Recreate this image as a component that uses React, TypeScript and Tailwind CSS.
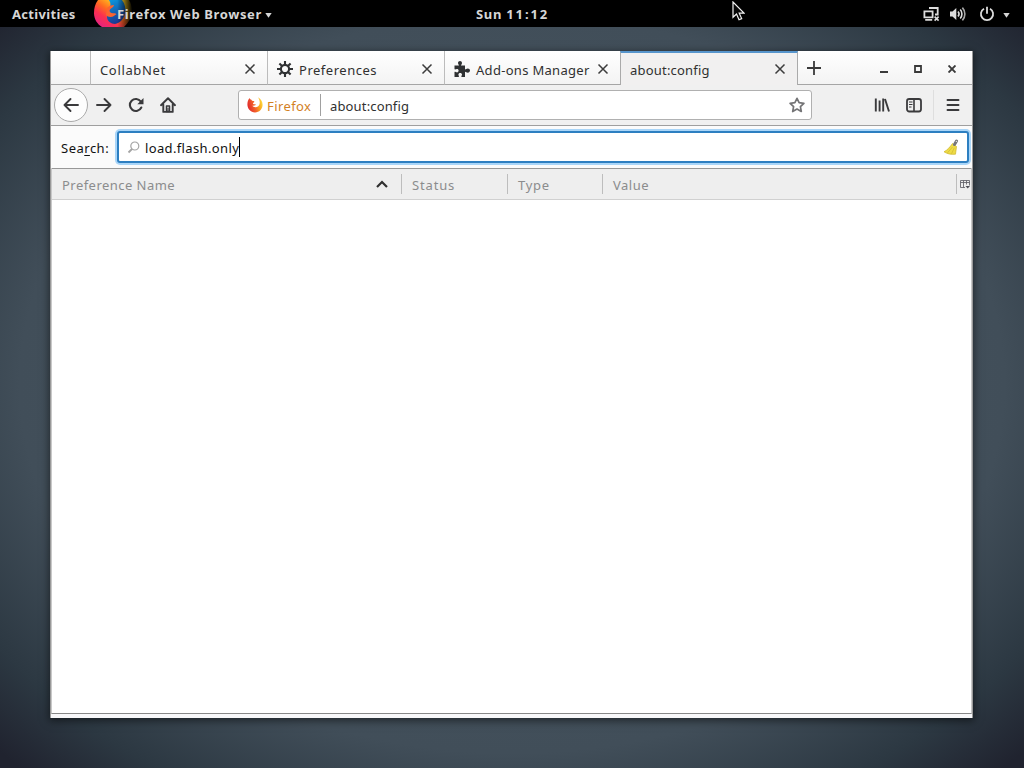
import React from "react";

const Close = ({ className = "" }: { className?: string }) => (
  <svg viewBox="0 0 12 12" className={`size-3 shrink-0 ${className}`} fill="none" stroke="#3c3c3c" strokeWidth="1.5">
    <path d="M1.5 1.5 10.5 10.5M10.5 1.5 1.5 10.5" />
  </svg>
);

const Gear = () => (
  <svg viewBox="-8 -8 16 16" className="mr-[6px] size-4 shrink-0" fill="none" stroke="#2f3133">
    <circle r="4.1" strokeWidth="2.1" />
    <path
      strokeWidth="2.1"
      d="M0-4.5V-8M0 4.5V8M-4.5 0H-8M4.5 0H8M-3.2-3.2-5.6-5.6M3.2 3.2 5.6 5.6M-3.2 3.2-5.6 5.6M3.2-3.2 5.6-5.6"
    />
  </svg>
);

const Puzzle = () => (
  <svg viewBox="0 0 16 16" className="mr-[6px] size-4 shrink-0" fill="#2f3133">
    <path d="M0.500 4.500H5C5 3.600 4 3 4 1.900 4 .8 4.900 0 6 0S8 .8 8 1.900C8 3 7 3.600 7 4.500H11V8.500C12 8.500 12.500 7.500 13.800 7.500C15 7.500 16 8.400 16 9.600C16 10.800 15 11.700 13.800 11.700C12.500 11.700 12 10.800 11 10.800V16H7.500C7 15 8 14.500 8 13.500C8 12.500 7.200 11.900 6.200 11.900C5.200 11.900 4.400 12.500 4.400 13.500C4.400 14.500 5.300 15 4.800 16H.5V11C1.500 10.500 2 11.400 3 11.400C4 11.400 4.600 10.600 4.600 9.600C4.600 8.600 4 7.900 3 7.900C2 7.900 1.500 8.800 .5 8.300Z" />
  </svg>
);

const FirefoxAppIcon = () => (
  <svg viewBox="0 0 40 27" className="absolute left-3 top-0 h-[27px] w-10">
    <defs>
      <linearGradient id="fxFlame" x1="0" y1="0.9" x2="0.9" y2="0">
        <stop offset="0" stopColor="#e0208a" />
        <stop offset="0.3" stopColor="#fb3050" />
        <stop offset="0.5" stopColor="#ff6a20" />
        <stop offset="0.8" stopColor="#ffcf20" />
      </linearGradient>
      <linearGradient id="fxGlobe" x1="0" y1="0" x2="0.3" y2="1">
        <stop offset="0" stopColor="#0a9be0" />
        <stop offset="1" stopColor="#1c3a94" />
      </linearGradient>
      <linearGradient id="fxFade" x1="0" y1="0" x2="1" y2="0">
        <stop offset="0.58" stopColor="#000" stopOpacity="0" />
        <stop offset="0.96" stopColor="#000" />
      </linearGradient>
    </defs>
    <path d="M4 0C1 4 0 8 0 13c0 6 3 11 8 14h22c5-5 8-10 8-16 0-4-1-8-3-11z" fill="url(#fxFlame)" />
    <path d="M15 0h13c3 4 4 8 3 13-1 6-5 10-10 11-4 0-8-3-8-7 0-3 1-6 2-8 2-3 2-6 0-9z" fill="url(#fxGlobe)" />
    <path d="M13 8c2-2 4-3 7-3 0 2-3 3-4 4.500-1 1.500 0 3 1.500 3.500 2 .5 4 0 5 1.300-2 1-3 2.700-6 2.700-2 0-3.500-1-4.500-2z" fill="#fb6430" />
    <path d="M0 0h40v27H0z" fill="url(#fxFade)" />
  </svg>
);

const SmallFirefox = () => (
  <svg viewBox="0 0 16 16" className="mr-[4px] size-4 shrink-0">
    <defs>
      <linearGradient id="fxSmall" x1="0" y1="0.6" x2="1" y2="0.3">
        <stop offset="0" stopColor="#e0282e" />
        <stop offset="0.45" stopColor="#f3642a" />
        <stop offset="0.7" stopColor="#f9a11b" />
        <stop offset="1" stopColor="#fde040" />
      </linearGradient>
    </defs>
    <path
      fill="url(#fxSmall)"
      d="M2.500 1C1 2.700.4 5 .4 7.600.4 12 3.800 15.500 8 15.500s7.600-3.400 7.600-7.700C15.600 4.500 14 2 11 .3c1.300 2 1.900 4 1.700 6-.3 2.500-2 3.900-4.300 3.900-1.400 0-2.500-.5-3.100-1.400 1.500.2 2.500-.2 3.500-1.100-.7-.9-1.700-.4-2.600-.8-.5-.7.1-1.100.9-1.700.3-.5.2-.8-.1-1.100-1.600 0-2.300-.5-2.600-1.400C3.500 2.500 2.900 2 2.500 1z"
    />
  </svg>
);

const TopBar = () => (
  <header className="relative flex h-[27px] shrink-0 items-center bg-black text-[13px] font-bold leading-[27px] text-[#d6d6d6]">
    <span className="w-[82px] pl-3 pt-px tracking-[0.33px]">Activities</span>
    <div className="relative flex h-full w-[200px] items-center overflow-hidden">
      <FirefoxAppIcon />
      <span className="relative ml-[35px] whitespace-nowrap pt-px tracking-[0.62px]">Firefox Web Browser</span>
      <svg viewBox="0 0 7 5" className="relative ml-[3px] mt-[4px] h-[5px] w-[7px]" fill="#d6d6d6">
        <path d="M.3 0h6.400L3.500 4.800z" />
      </svg>
    </div>
    <span className="ml-[194px] whitespace-nowrap pt-px tracking-[0.7px]">
      Sun <span className="tracking-[1.9px]">11:12</span>
    </span>
    <div className="ml-auto flex items-center pr-[14px]">
      <svg viewBox="0 0 17 16" className="mr-[10px] h-4 w-[17px]" fill="none" stroke="#dcdcdc" strokeWidth="1.800">
        <path d="M1.400 5.400h8.200v6H1.400zM2.200 13.800h7M6 2h8.700v6.500H12" />
        <path strokeWidth="1.600" d="m11.600 10.600 4 4M15.600 10.600l-4 4" />
      </svg>
      <svg viewBox="0 0 16 16" className="mr-[13px] size-4" fill="none" stroke="#dcdcdc" strokeWidth="1.600">
        <path fill="#dcdcdc" stroke="none" d="M0 5.500h2.500L6.300 2v12L2.500 10.500H0z" />
        <path d="M8 5.500c1.200 1.400 1.200 3.600 0 5M10.200 3.500c2.300 2.500 2.300 6.500 0 9" />
        <path stroke="#a5a5a5" d="M12.400 1.600c3.300 3.600 3.300 9.200 0 12.800" />
      </svg>
      <svg viewBox="0 0 16 16" className="mr-2 size-4" fill="none" stroke="#dcdcdc" strokeWidth="1.800">
        <path d="M5 2.700a6.100 6.100 0 1 0 6 0M8 .8v7" />
      </svg>
      <svg viewBox="0 0 7 5" className="mt-[4px] h-[5px] w-[7px]" fill="#d6d6d6">
        <path d="M.3 0h6.400L3.500 4.800z" />
      </svg>
    </div>
    <svg viewBox="0 0 13 20" className="absolute left-[732px] top-px h-5 w-[13px]">
      <path
        d="M1 1v15.300l3.500-3.200 2.500 5.700 2.700-1.200-2.500-5.400H12z"
        fill="#080808"
        stroke="#f2f2f2"
        strokeWidth="1.200"
      />
    </svg>
  </header>
);

const tabs = [
  { title: "CollabNet", icon: null, width: "w-[177px]", tracking: "tracking-[0.65px]" },
  { title: "Preferences", icon: <Gear />, width: "w-[177px]", tracking: "tracking-[0.52px]" },
  { title: "Add-ons Manager", icon: <Puzzle />, width: "w-[176px]", tracking: "tracking-[0.3px]" },
];

const TabStrip = () => (
  <div className="flex h-[34px] shrink-0 bg-linear-to-b from-white to-[#f3f3f3]">
    <div className="w-[39px] border-b border-[#a5a5a5]" />
    {tabs.map((t) => (
      <div
        key={t.title}
        className={`flex shrink-0 items-center border-b border-l border-b-[#a5a5a5] border-l-[#bcbcbc] pl-[9px] pr-[11px] pt-[3px] ${t.width}`}
      >
        {t.icon}
        <span className={`whitespace-nowrap pt-[2px] ${t.tracking}`}>{t.title}</span>
        <Close className="ml-auto" />
      </div>
    ))}
    <div className="flex w-[178px] shrink-0 items-center border-x border-t-2 border-x-[#aaa] border-t-[#5795cc] bg-[#f1f0f0] pl-[9px] pr-[11px]">
      <span className="pt-[2px] tracking-[0.2px]">about:config</span>
      <Close className="ml-auto" />
    </div>
    <div className="flex grow items-center border-b border-[#a5a5a5] pl-[9px] pr-[16px] text-[#3a3a3a]">
      <svg viewBox="0 0 14 14" className="size-[14px]" stroke="#3a3a3a" strokeWidth="1.800">
        <path d="M7 0v14M0 7h14" />
      </svg>
      <svg viewBox="0 0 8 10" className="ml-auto h-[10px] w-2 translate-y-[1px]" stroke="#3a3a3a" strokeWidth="2">
        <path d="M0 8h8" />
      </svg>
      <svg viewBox="0 0 8 8" className="ml-[26px] size-2 translate-y-[1px]" fill="none" stroke="#3a3a3a" strokeWidth="1.800">
        <path d="M1 1h6v6H1z" />
      </svg>
      <svg viewBox="0 0 8 8" className="ml-[26px] size-2 translate-y-[1px]" stroke="#3a3a3a" strokeWidth="1.900">
        <path d="m.5.5 7 7m0-7-7 7" />
      </svg>
    </div>
  </div>
);

const Toolbar = () => (
  <div className="flex h-[41px] shrink-0 items-center border-b border-[#9f9f9f] bg-[#f0f0f0] pl-[3px] pr-3">
    <div className="flex size-[34px] items-center justify-center rounded-full border border-[#aaa] bg-[#fdfdfd]">
      <svg viewBox="0 0 16 16" className="size-4" fill="none" stroke="#3a3a3c" strokeWidth="1.900" strokeLinecap="round" strokeLinejoin="round">
        <path d="M15 8H1.500M7.500 2 1.500 8l6 6" />
      </svg>
    </div>
    <svg viewBox="0 0 16 16" className="ml-2 size-4" fill="none" stroke="#3a3a3c" strokeWidth="1.900" strokeLinecap="round" strokeLinejoin="round">
      <path d="M1 8h13.500M8.500 2l6 6-6 6" />
    </svg>
    <svg viewBox="0 0 16 16" className="ml-4 size-4" fill="none" stroke="#3a3a3c" strokeWidth="2.100" strokeLinecap="round">
      <path d="M13.300 10.500A6 6 0 1 1 12.800 4.500" />
      <path d="M15.500 1v6.200H9.300z" fill="#3a3a3c" stroke="none" />
    </svg>
    <svg viewBox="0 0 16 16" className="ml-4 size-4" fill="none" stroke="#3a3a3c" strokeWidth="1.900" strokeLinecap="round" strokeLinejoin="round">
      <path d="M1 8.200 8 1.300l7 6.900M3.300 7.500v7.400h9.400V7.500" />
      <path d="M6.500 9h3v5.500h-3z" strokeWidth="1.500" />
      <path d="M8 11v3" strokeWidth="1.200" />
    </svg>
    <div className="ml-[62px] flex h-[30px] w-[574px] items-center rounded-[3px] border border-[#b0b0b0] bg-white pl-2 pr-[6px]">
      <SmallFirefox />
      <span className="w-[53px] whitespace-nowrap pt-[2px] tracking-[0.4px] text-[#d3811f]">Firefox</span>
      <div className="mr-[9px] h-[22px] w-px bg-[#a0a0a0]" />
      <span className="pt-[2px] tracking-[0.15px]">about:config</span>
      <svg viewBox="0 0 16 16" className="ml-auto size-4" fill="none" stroke="#747476" strokeWidth="1.700" strokeLinejoin="round">
        <path d="m8 1.300 2.100 4.400 4.800.6-3.500 3.300.9 4.900L8 12.100l-4.300 2.400.9-4.900L1.100 6.300l4.800-.6z" />
      </svg>
    </div>
    <svg viewBox="0 0 16 16" className="ml-auto size-4" fill="none" stroke="#3a3a3c" strokeWidth="1.900">
      <path d="M1.800 1.500v13M5.600 3.500v11M9.200 1.500v13M11 2l4 12.500" />
    </svg>
    <svg viewBox="0 0 16 16" className="ml-4 size-4" fill="none" stroke="#3a3a3c" strokeWidth="1.800">
      <rect x="1" y="2" width="14" height="12.500" rx="2.200" />
      <path d="M8 2v12.500" strokeWidth="1.600" />
      <path d="M3 5h3.500M3 7.500h3.500M3 10h2.500" strokeWidth="1.100" />
    </svg>
    <div className="ml-[11px] h-[30px] w-px bg-[#dedede]" />
    <svg viewBox="0 0 14 14" className="ml-3 size-[14px]" stroke="#3a3a3c" strokeWidth="1.900" strokeLinecap="round">
      <path d="M1.500 2h11M1.500 7h11M1.500 12h11" />
    </svg>
  </div>
);

const SearchRow = () => (
  <div className="flex h-[42px] shrink-0 items-center bg-[#fbfbfb] pl-[10px] pr-[3px] text-[#111]">
    <label className="w-[56px] whitespace-nowrap pt-[2px] tracking-[0.5px]">
      Sea<span className="underline underline-offset-2">r</span>ch:
    </label>
    <div className="flex h-8 grow items-center rounded-[3px] border-2 border-[#2d7fc1] bg-white pl-2 pr-2 shadow-[0_0_0_2px_#a9d5f8]">
      <svg viewBox="0 0 13 13" className="mr-[5px] size-[13px]" fill="none" stroke="#a4a4a4" strokeWidth="1.200">
        <circle cx="7.800" cy="5" r="4" />
        <path d="M5 8 1.500 11.500" strokeWidth="1.800" />
      </svg>
      <span className="pt-[2px] tracking-[0.36px]">load.flash.only</span>
      <div className="h-5 w-px bg-black" />
      <svg viewBox="0 0 16 16" className="ml-auto size-4">
        <path d="M9.500 4.500 13.500 7.500 12.500 15.200C8 15.800 4 14.800 1 12.800 4.500 11 7 8 9.500 4.500z" fill="#eedb45" stroke="#cdb52b" strokeWidth=".7" />
        <path d="m4.500 13.800 5-5.800M8.500 14.800l2.800-6" stroke="#d3bd35" strokeWidth=".8" fill="none" />
        <path d="m11.500 5.500 2-3.500" stroke="#76767a" strokeWidth="3" strokeLinecap="round" />
        <circle cx="13.400" cy="2.400" r=".7" fill="#ddd" />
      </svg>
    </div>
  </div>
);

const TreeHeader = () => (
  <div className="flex h-8 shrink-0 items-center border-b border-t border-b-[#d0d0d0] border-t-[#989898] bg-[#eeeeee] text-[#8b8c8d]">
    <div className="flex w-[349px] items-center pl-[10px] pr-[13px] pt-[2px]">
      <span className="tracking-[0.46px]">Preference Name</span>
      <svg viewBox="0 0 12 8" className="ml-auto h-2 w-3 -translate-y-px" fill="none" stroke="#303030" strokeWidth="2.200">
        <path d="M1 7 6 2l5 5" />
      </svg>
    </div>
    <div className="h-5 w-px bg-[#bdbdbd]" />
    <span className="w-[105px] pl-[10px] pt-[2px] tracking-[0.85px]">Status</span>
    <div className="h-5 w-px bg-[#bdbdbd]" />
    <span className="w-[94px] pl-[10px] pt-[2px] tracking-[0.7px]">Type</span>
    <div className="h-5 w-px bg-[#bdbdbd]" />
    <span className="w-[353px] pl-[10px] pt-[2px] tracking-[0.5px]">Value</span>
    <div className="h-5 w-px bg-[#bdbdbd]" />
    <svg viewBox="0 0 10 10" className="ml-[3px] size-[10px] shrink-0" fill="none" stroke="#626268" strokeWidth="1">
      <path d="M5 8.500H.5v-7h9v5M.5 3.500h9M3.500 1.500v7M6.500 1.500v4" strokeOpacity="0.85" />
      <path d="M5.500 7H10L7.700 9.500z" fill="#505058" stroke="none" />
    </svg>
  </div>
);

export default function App() {
  return (
    <div className="flex h-[768px] w-[1024px] flex-col overflow-hidden bg-[radial-gradient(ellipse_724px_543px_at_50%_50%,#4a5963_0%,#414e59_68%,#2c3842_86%,#20232f_98%)] font-['Noto_Sans',sans-serif] text-[13px] leading-4 text-[#303030]">
      <TopBar />
      <main className="ml-[50px] mt-6 flex h-[667px] w-[923px] flex-col border-l border-r border-[#999] bg-[#fbfbfb] shadow-[0_2px_8px_1px_rgba(0,0,0,0.5)]">
        <TabStrip />
        <Toolbar />
        <SearchRow />
        <div className="flex grow flex-col border-b border-l border-r border-b-[#888] border-l-[#c8c8c8] border-r-[#c8c8c8] bg-white">
          <TreeHeader />
        </div>
        <div className="h-[4px] shrink-0 bg-[#f8f8fa]" />
      </main>
    </div>
  );
}
